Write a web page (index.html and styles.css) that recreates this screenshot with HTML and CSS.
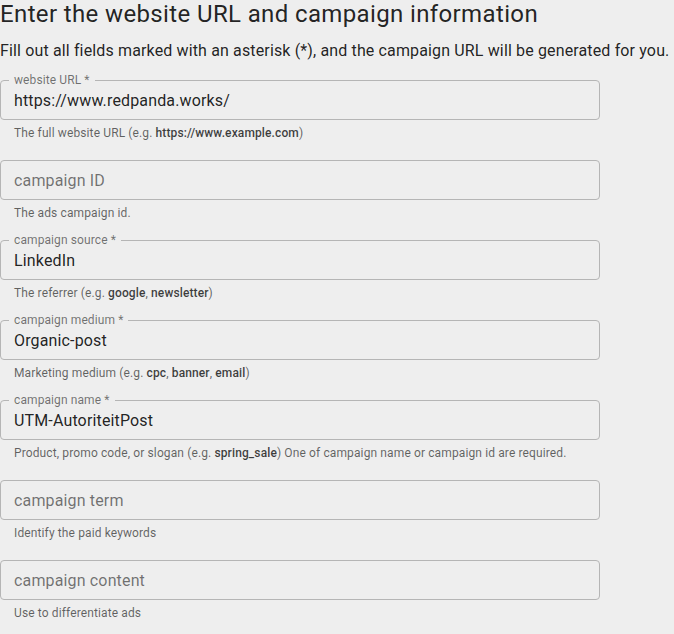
FILE: index.html
```html
<!DOCTYPE html>
<html lang="en">
<head>
  <meta charset="UTF-8" />
  <meta name="viewport" content="width=device-width, initial-scale=1.0" />
  <title>Campaign URL Builder</title>
  <link rel="stylesheet" href="styles.css">
</head>
<body>
  <h2>Enter the website URL and campaign information</h2>
  <p class="intro">Fill out all fields marked with an asterisk (*), and the campaign URL will be generated for you.</p>

  <div class="field">
    <div class="box">
      <label for="websiteUrl">website URL *</label>
      <input type="text" id="websiteUrl" value="https://www.redpanda.works/" />
    </div>
    <p class="helper">The full website URL (e.g. <b>https://www.example.com</b>)</p>
  </div>

  <div class="field">
    <div class="box">
      <input type="text" id="campaignId" placeholder="campaign ID" />
    </div>
    <p class="helper">The ads campaign id.</p>
  </div>

  <div class="field">
    <div class="box">
      <label for="campaignSource">campaign source *</label>
      <input type="text" id="campaignSource" value="LinkedIn" />
    </div>
    <p class="helper">The referrer (e.g. <b>google</b>, <b>newsletter</b>)</p>
  </div>

  <div class="field">
    <div class="box">
      <label for="campaignMedium">campaign medium *</label>
      <input type="text" id="campaignMedium" value="Organic-post" />
    </div>
    <p class="helper">Marketing medium (e.g. <b>cpc</b>, <b>banner</b>, <b>email</b>)</p>
  </div>

  <div class="field">
    <div class="box">
      <label for="campaignName">campaign name *</label>
      <input type="text" id="campaignName" value="UTM-AutoriteitPost" />
    </div>
    <p class="helper">Product, promo code, or slogan (e.g. <b>spring_sale</b>) One of campaign name or campaign id are required.</p>
  </div>

  <div class="field">
    <div class="box">
      <input type="text" id="campaignTerm" placeholder="campaign term" />
    </div>
    <p class="helper">Identify the paid keywords</p>
  </div>

  <div class="field">
    <div class="box">
      <input type="text" id="campaignContent" placeholder="campaign content" />
    </div>
    <p class="helper">Use to differentiate ads</p>
  </div>
</body>
</html>
```

FILE: styles.css
```css
body {
  background-color: #eeeeee;
  color: rgba(0, 0, 0, 0.87);
  font-family: Roboto, 'Liberation Sans', sans-serif;
  margin: 0;
  padding: 0;
}

h2 {
  font-size: 24px;
  font-weight: 400;
  line-height: 28px;
  letter-spacing: 0.37px;
  margin: 0 0 11px;
}

.intro {
  font-size: 16px;
  line-height: 24px;
  letter-spacing: 0.14px;
  margin: 0 0 17px;
}

.field {
  width: 600px;
  margin-bottom: 17px;
}

.box {
  position: relative;
  height: 40px;
  box-sizing: border-box;
  border: 1px solid #b5b5b5;
  border-radius: 4px;
}

.box label {
  position: absolute;
  top: -8px;
  left: 8px;
  padding: 0 5px;
  background-color: #eeeeee;
  color: rgba(0, 0, 0, 0.54);
  font-size: 12px;
  line-height: 14px;
  letter-spacing: 0.1px;
}

.box input {
  width: 100%;
  height: 38px;
  box-sizing: border-box;
  padding: 0 13px;
  border: none;
  background: transparent;
  font-family: inherit;
  font-size: 16px;
  letter-spacing: 0.15px;
  color: rgba(0, 0, 0, 0.87);
  outline: none;
}

.box input::placeholder {
  color: rgba(0, 0, 0, 0.54);
  opacity: 1;
}

.helper {
  margin: 3px 0 0 14px;
  font-size: 12px;
  line-height: 20px;
  letter-spacing: 0.12px;
  color: rgba(0, 0, 0, 0.6);
}

.helper b {
  font-weight: 500;
  color: rgba(0, 0, 0, 0.75);
}
```
